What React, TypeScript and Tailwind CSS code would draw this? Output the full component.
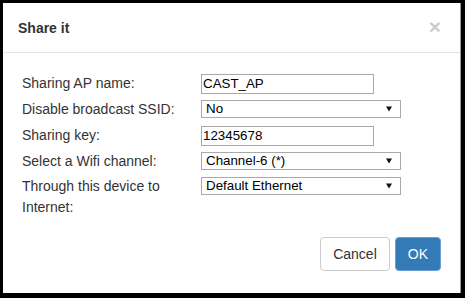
export default function App() {
  return (
    <div className="w-[465px] h-[298px] bg-black pt-[3px] pl-[3px] pr-[4px] pb-[5px] font-['Liberation_Sans',Arial,sans-serif]">
      <div className="h-full bg-white border-r border-[#999] flex flex-col">
        {/* header */}
        <div className="h-[50px] px-[15px] flex items-center justify-between border-b border-[#e5e5e5]">
          <h4 className="text-[14px] leading-[20px] font-bold text-[#333]">Share it</h4>
          <button className="text-[21px] leading-none font-bold text-[#000] opacity-20 mr-[4px] -mt-[2px]">×</button>
        </div>

        {/* body */}
        <div className="pt-[20px] pl-[19px] grid grid-cols-[179px_auto] text-[14px] text-[#333]">
          <label className="h-[27px] leading-[20px] pt-0">Sharing AP name:</label>
          <div className="h-[27px]">
            <input
              defaultValue="CAST_AP"
              className="w-[173px] h-[20px] border border-[#a9a9a9] px-[1px] text-[13.33px] text-black outline-none"
            />
          </div>

          <label className="h-[25px] leading-[20px] -mt-[1px]">Disable broadcast SSID:</label>
          <div className="h-[25px]">
            <FakeSelect value="No" />
          </div>

          <label className="h-[27px] leading-[20px]">Sharing key:</label>
          <div className="h-[27px]">
            <input
              defaultValue="12345678"
              className="w-[173px] h-[20px] border border-[#a9a9a9] px-[1px] text-[13.33px] text-black outline-none"
            />
          </div>

          <label className="h-[25px] leading-[20px] -mt-[1px]">Select a Wifi channel:</label>
          <div className="h-[25px]">
            <FakeSelect value="Channel-6 (*)" />
          </div>

          <label className="leading-[21px] -mt-[1px]">
            Through this device to
            <br />
            Internet:
          </label>
          <div>
            <FakeSelect value="Default Ethernet" />
          </div>
        </div>

        {/* footer */}
        <div className="mt-auto pb-[22px] pr-[19px] flex justify-end gap-[5px]">
          <button className="h-[34px] px-[12px] border border-[#ccc] rounded-[4px] bg-white text-[14px] text-[#333]">
            Cancel
          </button>
          <button className="h-[34px] px-[12px] border border-[#6a9fd4] rounded-[4px] bg-[#337ab7] text-[14px] text-white">
            OK
          </button>
        </div>
      </div>
    </div>
  );
}

function FakeSelect({ value }: { value: string }) {
  return (
    <div className="w-[200px] h-[18px] border border-[#a9a9a9] flex items-center justify-between pl-[4px] pr-[8px] text-[13.33px] text-black">
      <span>{value}</span>
      <svg width="6" height="6" viewBox="0 0 6 6">
        <path d="M0 0.5 L6 0.5 L3 5.5 Z" fill="#111" />
      </svg>
    </div>
  );
}
